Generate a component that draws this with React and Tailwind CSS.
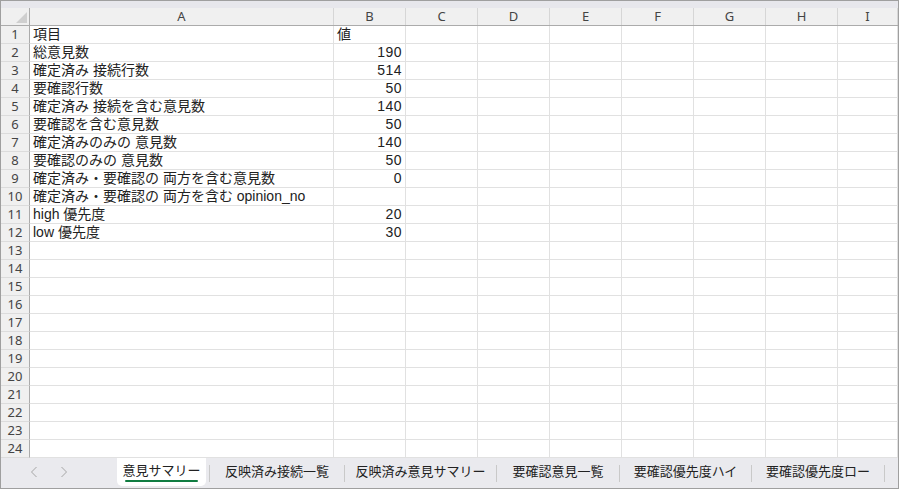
const columns = [
  { key: 'A', width: 'w-[304px]' },
  { key: 'B', width: 'w-[72px]' },
  { key: 'C', width: 'w-[72px]' },
  { key: 'D', width: 'w-[72px]' },
  { key: 'E', width: 'w-[72px]' },
  { key: 'F', width: 'w-[72px]' },
  { key: 'G', width: 'w-[72px]' },
  { key: 'H', width: 'w-[72px]' },
  { key: 'I', width: 'flex-1' },
]

const data = [
  ['項目', '値'],
  ['総意見数', 190],
  ['確定済み 接続行数', 514],
  ['要確認行数', 50],
  ['確定済み 接続を含む意見数', 140],
  ['要確認を含む意見数', 50],
  ['確定済みのみの 意見数', 140],
  ['要確認のみの 意見数', 50],
  ['確定済み・要確認の 両方を含む意見数', 0],
  ['確定済み・要確認の 両方を含む opinion_no', ''],
  ['high 優先度', 20],
  ['low 優先度', 30],
]

const tabs = [
  { label: '反映済み接続一覧', width: 'w-[134px]' },
  { label: '反映済み意見サマリー', width: 'w-[151px]' },
  { label: '要確認意見一覧', width: 'w-[122px]' },
  { label: '要確認優先度ハイ', width: 'w-[131px]' },
  { label: '要確認優先度ロー', width: 'w-[132px]' },
]

const rows = Array.from({ length: 24 }, (_, i) => data[i] || ['', ''])

const cellText = (row, colIndex) => {
  if (colIndex === 0) return row[0]
  if (colIndex === 1) return row[1]
  return ''
}

const Separator = () => <div className="h-[17px] w-px shrink-0 bg-[#c9c9c9]" />

const App = () => {
  return (
    <div
      className="flex h-[489px] w-[899px] flex-col overflow-hidden border border-[#9f9f9f] bg-white text-[#222]"
      style={{ fontFamily: '"Liberation Sans", "Noto Sans CJK JP", sans-serif' }}
    >
      <div className="h-[7px] shrink-0 bg-[#e7e7ec]" />

      {/* column headers */}
      <div className="flex h-[18px] shrink-0 border-b border-[#ababab] bg-[#f0f0f0]">
        <div className="relative w-[29px] shrink-0 border-r border-[#ababab]">
          <svg className="absolute bottom-[2px] right-[2px]" width="11" height="11" viewBox="0 0 11 11">
            <polygon points="11,0 11,11 0,11" fill="#cfcfcf" />
          </svg>
        </div>
        {columns.map((col) => (
          <div
            key={col.key}
            className={`${col.width} shrink-0 overflow-hidden border-r border-[#d6d6d6] text-center text-[13px] leading-[17px] text-[#444]`}
            style={{ fontFamily: '"Noto Sans", sans-serif' }}
          >
            {col.key}
          </div>
        ))}
      </div>

      {/* grid body */}
      <div className="flex flex-col">
        {rows.map((row, i) => (
          <div key={i} className="flex h-[18px] shrink-0">
            <div
              className="w-[29px] shrink-0 overflow-hidden border-b border-r border-b-[#dcdcdc] border-r-[#ababab] bg-[#f0f0f0] text-center text-[13px] leading-[17px] text-[#444]"
              style={{ fontFamily: '"Noto Sans", sans-serif' }}
            >
              {i + 1}
            </div>
            {columns.map((col, c) => {
              const value = cellText(row, c)
              const numeric = typeof value === 'number'
              return (
                <div
                  key={col.key}
                  className={`${col.width} shrink-0 whitespace-nowrap border-b border-r border-[#e1e1e1] px-[3px] text-[14px] leading-[17px] ${
                    numeric ? 'text-right tracking-[0.5px]' : 'text-left'
                  }`}
                >
                  {value}
                </div>
              )
            })}
          </div>
        ))}
      </div>

      {/* sheet tabs */}
      <div className="flex flex-1 items-stretch bg-[#eaeaee] text-[13px] text-[#222]">
        <div className="flex w-[116px] shrink-0 items-center gap-[22px] pl-[29px] pb-[2px]">
          <svg width="8" height="12" viewBox="0 0 8 12" fill="none">
            <path d="M6.5 1 L1.5 6 L6.5 11" stroke="#a6a6a6" strokeWidth="1" />
          </svg>
          <svg width="8" height="12" viewBox="0 0 8 12" fill="none">
            <path d="M1.5 1 L6.5 6 L1.5 11" stroke="#a6a6a6" strokeWidth="1" />
          </svg>
        </div>
        <div className="relative mb-[2px] flex w-[89px] shrink-0 items-center justify-center rounded-b-[5px] bg-white pb-[3px]">
          意見サマリー
          <span className="absolute bottom-[4px] left-[8px] right-[8px] h-[2px] rounded-full bg-[#107c41]" />
        </div>
        <div className="flex items-center pl-[3px]">
          <Separator />
          {tabs.map((tab) => (
            <div key={tab.label} className="flex items-center">
              <div className={`${tab.width} flex shrink-0 items-center justify-center pb-[3px]`}>
                {tab.label}
              </div>
              <Separator />
            </div>
          ))}
        </div>
      </div>
    </div>
  )
}

export default App
